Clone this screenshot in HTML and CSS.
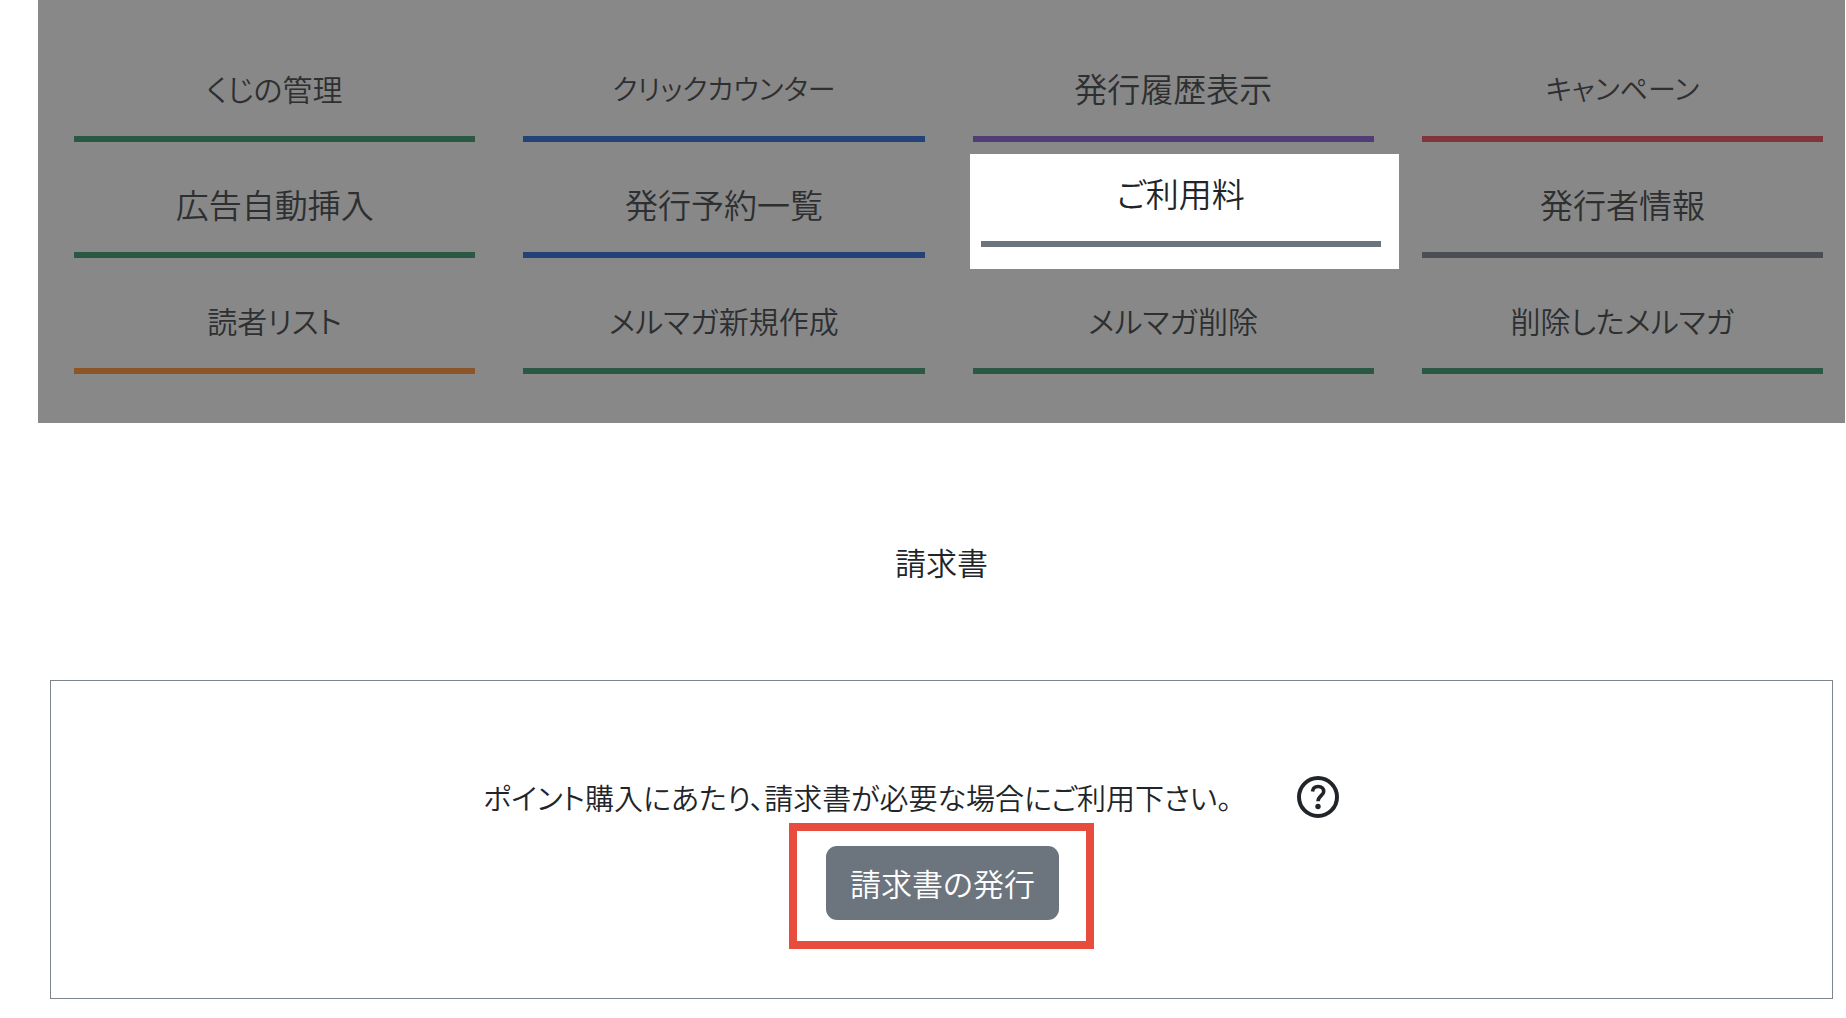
FILE: index.html
```html
<!DOCTYPE html>
<html lang="ja">
<head>
<meta charset="utf-8">
<meta name="viewport" content="width=device-width, initial-scale=1">
<title>請求書</title>
<link rel="stylesheet" href="styles.css">
</head>
<body>
<nav class="menu" aria-label="メニュー">
  <ul class="menu-grid">
    <li class="menu-cell"><a class="menu-link mixed green" href="#">くじの管理</a></li>
    <li class="menu-cell"><a class="menu-link kana blue" href="#">クリックカウンター</a></li>
    <li class="menu-cell"><a class="menu-link purple" href="#">発行履歴表示</a></li>
    <li class="menu-cell"><a class="menu-link kana red" href="#">キャンペーン</a></li>
    <li class="menu-cell"><a class="menu-link green" href="#">広告自動挿入</a></li>
    <li class="menu-cell"><a class="menu-link blue" href="#">発行予約一覧</a></li>
    <li class="menu-cell"><div class="spotlight"><a class="menu-link current" href="#" aria-current="page">ご利用料</a></div></li>
    <li class="menu-cell"><a class="menu-link gray" href="#">発行者情報</a></li>
    <li class="menu-cell"><a class="menu-link mixed orange" href="#">読者リスト</a></li>
    <li class="menu-cell"><a class="menu-link mixed green" href="#">メルマガ新規作成</a></li>
    <li class="menu-cell"><a class="menu-link mixed green" href="#">メルマガ削除</a></li>
    <li class="menu-cell"><a class="menu-link mixed green" href="#">削除したメルマガ</a></li>
  </ul>
</nav>
<main class="content">
  <h1 class="title">請求書</h1>
  <section class="card">
    <div class="message">
      <p class="message-text">ポイント購入にあたり、請求書が必要な場合にご利用下さい。</p>
      <a class="help" href="#" aria-label="ヘルプ">
        <svg class="help-icon" viewBox="0 0 44 44" fill="none" stroke="currentColor" aria-hidden="true">
          <circle cx="22" cy="22" r="19" stroke-width="4"/>
          <path d="M16.5 16.5C16.8 13 19 11.500 22.200 11.500C25.600 11.500 27.700 13.500 27.700 16.400C27.700 20.500 22 20.800 22 26.200" stroke-width="3.600"/>
          <circle cx="22" cy="31.500" r="2.700" fill="currentColor" stroke="none"/>
        </svg>
      </a>
    </div>
    <div class="frame"><button class="issue" type="button">請求書の発行</button></div>
  </section>
</main>
</body>
</html>
```
FILE: styles.css
```css
* {
  box-sizing: border-box;
}

body {
  margin: 0;
  padding: 0 1px 0 38px;
  background: #fff;
  color: #212529;
  font-family: "Noto Sans CJK JP", sans-serif;
  font-weight: 350;
  font-feature-settings: "palt";
}

.menu {
  padding: 42px 22px 49px 36px;
  background: #888;
}

.menu-grid {
  display: grid;
  grid-template-columns: repeat(4, 1fr);
  gap: 16px 48px;
  margin: 0;
  padding: 0;
  list-style: none;
}

.menu-cell {
  position: relative;
  min-height: 100px;
}

.menu-link {
  display: block;
  padding: 22px 0 24px;
  border-bottom: 6px solid;
  color: #2d2f31;
  font-size: 33px;
  line-height: 48px;
  text-align: center;
  text-decoration: none;
  white-space: nowrap;
}

.mixed { font-size: 30px; }
.kana { font-size: 28px; }

.green { border-color: #2a5842; }
.blue { border-color: #234378; }
.purple { border-color: #513d75; }
.red { border-color: #80343c; }
.gray { border-color: #4b4e52; }
.orange { border-color: #8b5527; }

/* The current item is lifted above the dimmed menu. */
.spotlight {
  position: absolute;
  inset: -4px -25px -11px -3px;
  padding: 0 18px 0 11px;
  background: #fff;
}

.current {
  padding-top: 15px;
  border-color: #6c757d;
  color: #212529;
}

.content {
  padding: 115px 12px 20px;
}

.title {
  margin: 0 0 94px;
  font-size: 31px;
  font-weight: inherit;
  line-height: 48px;
  text-align: center;
}

.card {
  display: flex;
  flex-direction: column;
  align-items: center;
  padding: 92px 0 49px;
  border: 1px solid #7c858b;
}

.message {
  display: flex;
  align-items: center;
  gap: 64px;
  margin: 0 60px 2px 0;
}

.message-text {
  margin: 0;
  font-size: 29px;
  line-height: 48px;
}

.help {
  display: flex;
  color: inherit;
}

.help-icon {
  width: 44px;
  height: 44px;
}

.frame {
  display: flex;
  padding: 15px 27px 21px 29px;
  border: 8px solid #e84c3d;
}

.issue {
  padding: 13px 24px;
  border: 0;
  border-radius: 11px;
  background: #6c757d;
  color: #fff;
  font: inherit;
  font-size: 31px;
  font-feature-settings: inherit;
  line-height: 48px;
}
```
